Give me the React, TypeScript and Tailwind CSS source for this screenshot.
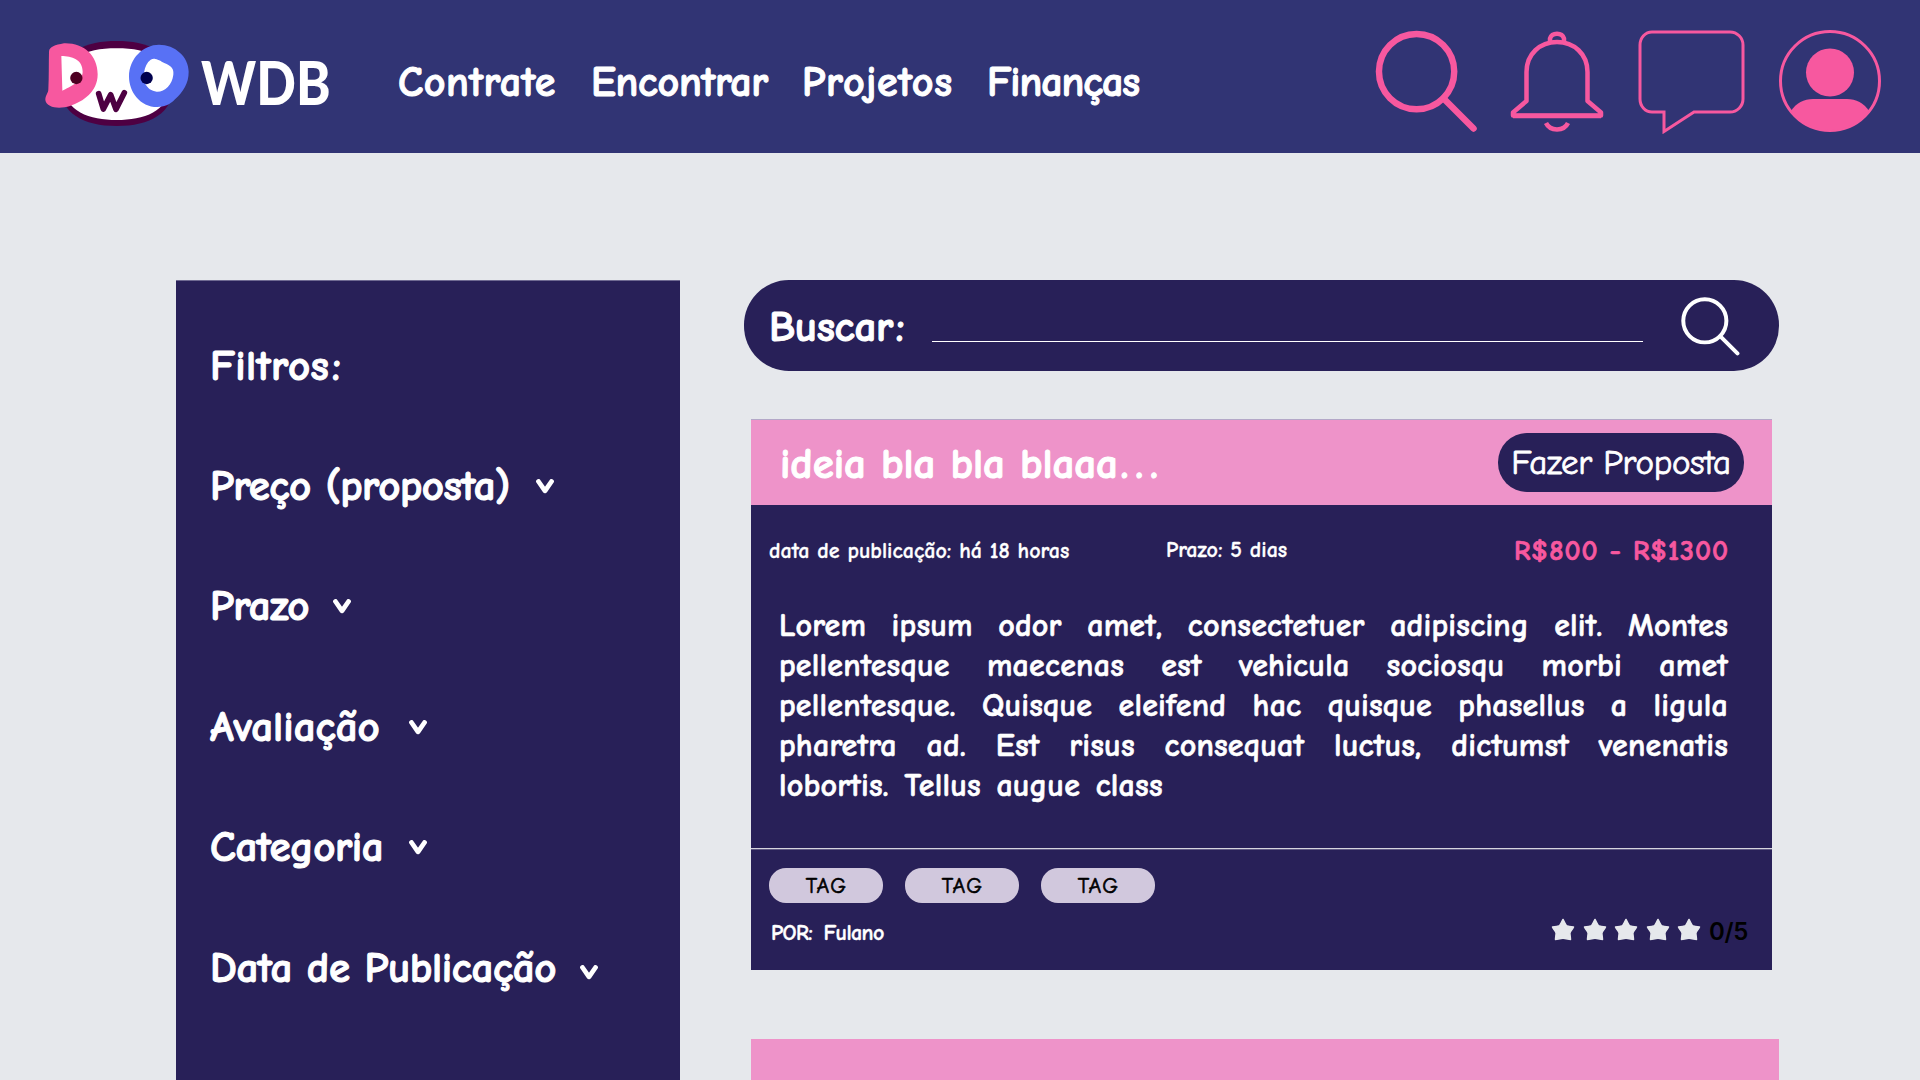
function Logo() {
  return (
    <svg className="h-[110px] w-[160px]" viewBox="0 0 480 330" fill="none">
      <path d="M60 165C60 60 140 33 230 33C320 33 400 60 400 165C400 250 330 288 230 288C130 288 60 250 60 165Z" fill="#4E0042" />
      <path d="M72 165C72 85 130 55 230 55C330 55 388 85 388 165C388 245 310 270 230 270C150 270 72 245 72 165Z" fill="#fff" />
      <path d="M27 65C28 50 45 45 72 40C130 38 173 75 173 133C173 185 130 215 90 228C60 237 20 235 16 210C16 195 25 190 25 178C27 140 26 100 27 65Z" fill="#F7589F" />
      <path d="M64 78C95 78 128 88 128 125C128 155 90 170 67 182Z" fill="#fff" />
      <path d="M357 44C405 44 446 80 446 125C446 160 430 185 405 208C390 225 370 231 352 231C300 231 267 185 267 140C267 85 310 44 357 44Z" fill="#5871F5" />
      <path d="M346 87C356 88 365 96 380 102C395 109 402 118 400 134C396 165 375 186 350 185C335 184 322 175 315 160C308 145 310 105 332 89C338 86 342 86 346 87Z" fill="#fff" />
      <circle cx="109" cy="144" r="18.500" fill="#4E0022" />
      <circle cx="320" cy="144" r="18.500" fill="#00004E" />
      <path d="M176 191L190 237L212 194L228 238L253 188" stroke="#4E0042" strokeWidth="17" strokeLinecap="round" strokeLinejoin="round" />
    </svg>
  );
}

function SearchIcon({ className, strokeWidth }: { className: string; strokeWidth: number }) {
  return (
    <svg className={className} viewBox="0 0 104 104" fill="none" stroke="currentColor" strokeWidth={strokeWidth}>
      <circle cx="42" cy="42" r="38" />
      <path d="M69 69L99.500 99.500" strokeLinecap="round" />
    </svg>
  );
}

function BellIcon() {
  return (
    <svg className="h-[102px] w-[94px]" viewBox="0 0 94 102" fill="none" stroke="currentColor" strokeWidth="4.500">
      <path d="M40 12V8.500A7.300 6.500 0 0 1 54 8.500V12" />
      <path d="M3 85.500V82.500L16.500 71V42C16.500 24 30 12 47 12S77.500 24 77.500 42V71L91 82.500V85.500Z" strokeLinejoin="round" />
      <path d="M3 86H91" />
      <path d="M36 93C40 101.500 54 101.500 58 93" />
    </svg>
  );
}

function ChatIcon() {
  return (
    <svg className="h-[104px] w-[107px]" viewBox="0 0 107 104" fill="none" stroke="currentColor" strokeWidth="3">
      <path d="M14 2H92A13 13 0 0 1 105 15V69A13 13 0 0 1 92 82H56L26 101.500V82H14A12 13 0 0 1 2 69V15A12 13 0 0 1 14 2Z" />
    </svg>
  );
}

function UserIcon() {
  return (
    <svg className="h-[104px] w-[104px]" viewBox="0 0 104 104" fill="none">
      <circle cx="52" cy="52" r="49.500" stroke="currentColor" strokeWidth="3" />
      <circle cx="52" cy="43.500" r="24" fill="currentColor" />
      <path d="M13 82C18 74 26 70 35 70H69C78 70 86 74 91 82A49.500 49.500 0 0 1 13 82Z" fill="currentColor" />
    </svg>
  );
}

function Chevron({ className }: { className: string }) {
  return (
    <svg className={'h-[15px] w-[18px] ' + className} viewBox="0 0 18 15" fill="none">
      <path d="M2.500 2.500L9 11.800L15.500 2.500" stroke="#fff" strokeWidth="4.800" strokeLinecap="round" strokeLinejoin="round" />
    </svg>
  );
}

function Star() {
  return (
    <svg className="h-[23px] w-[24px]" viewBox="0 0 24 23">
      <path d="M12 1.500C13.500 4 14.500 6.500 15.500 7.800C17.500 8.500 20.500 8.800 22.500 9C21.500 11.500 19.500 13 18.900 15C18.900 17 19.500 19.500 19.500 21.500C17 21.200 14.500 20.300 12 20.300C9.500 20.300 7 21.200 4.500 21.500C4.500 19.500 5.100 17 5.100 15C4.500 13 2.500 11.500 1.500 9C3.500 8.800 6.500 8.500 8.500 7.800C9.500 6.500 10.500 4 12 1.500Z" fill="#E6E8EC" stroke="#E6E8EC" strokeWidth="1.500" strokeLinejoin="round" />
    </svg>
  );
}

const filters = [
  { label: 'Preço (proposta)', text: 'w-[298px] tracking-[-0.55px]', chevron: 'ml-[28px]' },
  { label: 'Prazo', text: 'w-[98px] tracking-[-0.5px]', chevron: 'ml-[25px]' },
  { label: 'Avaliação', text: 'w-[168px] tracking-[0px]', chevron: 'ml-[31px]' },
  { label: 'Categoria', text: 'w-[172px] tracking-[-0.45px]', chevron: 'ml-[27px]' },
  { label: 'Data de Publicação', text: 'w-[346px] tracking-[-0.4px]', chevron: 'ml-[24px] mt-[9px]' },
];

const description = [
  'Lorem ipsum odor amet, consectetuer adipiscing elit. Montes',
  'pellentesque maecenas est vehicula sociosqu morbi amet',
  'pellentesque. Quisque eleifend hac quisque phasellus a ligula',
  'pharetra ad. Est risus consequat luctus, dictumst venenatis',
];

export default function App() {
  return (
    <div className="flex h-[1080px] w-[1920px] flex-col overflow-hidden whitespace-nowrap bg-[#E6E8EC] font-['Comic_Neue','Comic_Sans_MS',cursive] font-bold text-white">
      <header className="flex h-[153px] shrink-0 bg-[#313474]">
        <div className="flex w-[398px] items-start pl-[40px] pt-[30px]">
          <Logo />
          <div className="ml-px mt-[12px] origin-left scale-x-[0.87] font-['Lato'] text-[60px] font-black leading-[80px]">WDB</div>
        </div>
        <nav className="flex items-center gap-[35px] pt-[12px] text-[42px] [-webkit-text-stroke:1px_white]">
          <a className="w-[158px] tracking-[0.5px]">Contrate</a>
          <a className="w-[176px] tracking-[-0.3px]">Encontrar</a>
          <a className="w-[150px] tracking-[0.7px]">Projetos</a>
          <a className="w-[152px] tracking-[-1.06px]">Finanças</a>
        </nav>
        <div className="ml-auto flex items-start pr-[38px] pt-[29px] text-[#F7589F]">
          <SearchIcon className="mt-px h-[103px] w-[103px]" strokeWidth={6.5} />
          <div className="ml-[32px] mt-px"><BellIcon /></div>
          <div className="ml-[34px] mt-px"><ChatIcon /></div>
          <div className="ml-[33px]"><UserIcon /></div>
        </div>
      </header>

      <main className="flex items-start pl-[176px] pt-[127px]">
        <aside className="h-[800px] w-[504px] border-t border-[#6F6A92] bg-[#282058] pl-[34px] pt-[25px] text-[43px] leading-none [-webkit-text-stroke:1px_white]">
          <div className="flex h-[120.400px] items-center tracking-[0.3px]">Filtros<span className="ml-[3px]">:</span></div>
          {filters.map((f) => (
            <div key={f.label} className="flex h-[120.400px] items-center">
              <span className={f.text}>{f.label}</span>
              <Chevron className={f.chevron} />
            </div>
          ))}
        </aside>

        <section className="ml-[64px] w-[1035px]">
          <div className="flex h-[91px] items-center rounded-[45px] bg-[#282058] pl-[25px]">
            <div className="mt-[3px] w-[132px] text-[43px] leading-none tracking-[-0.4px] [-webkit-text-stroke:1px_white]">Buscar<span className="ml-[3px]">:</span></div>
            <div className="ml-[31px] mt-[32px] h-px w-[711px] bg-white" />
            <SearchIcon className="ml-[38px] mt-px h-[59px] w-[59px] text-white" strokeWidth={7} />
          </div>

          <article className="ml-[7px] mt-[48px] h-[551px] w-[1021px] bg-[#282058]">
            <div className="flex h-[86px] items-center justify-between border-t border-[#B4A8C8] bg-[#EE93C9] pl-[29px] pr-[28px]">
              <div className="mt-[4px] text-[43px] leading-none tracking-[-0.1px] [-webkit-text-stroke:1px_white]">
                ideia bla bla blaaa<span className="ml-[3px] tracking-[7px]">...</span>
              </div>
              <button className="flex h-[59px] w-[246px] items-center justify-center rounded-[29px] bg-[#282058] text-[35px] font-normal leading-none tracking-[-0.3px] [-webkit-text-stroke:0.8px_white]">Fazer Proposta</button>
            </div>
            <div className="flex h-[88px] items-center pl-[18px] leading-none">
              <div className="mt-[4px] w-[397px] text-[22px] [-webkit-text-stroke:0.3px_white]">data de publicação: há 18 horas</div>
              <div className="mt-[2px] w-[348px] text-[22px] [-webkit-text-stroke:0.3px_white]">Prazo: 5 dias</div>
              <div className="mt-[4px] text-[28px] tracking-[1px] text-[#F7589F] [-webkit-text-stroke:0.7px_#F7589F]">R$800 - R$1300</div>
            </div>
            <div className="ml-[28px] mt-[13px] w-[949px] text-[32px] leading-[40px] tracking-[0.2px] [-webkit-text-stroke:0.6px_white]">
              {description.map((line) => (
                <div key={line} className="[text-align-last:justify] whitespace-normal">{line}</div>
              ))}
              <div className="[word-spacing:4px]">lobortis. Tellus augue class</div>
            </div>
            <div className="mt-[42px] h-[2px] border-t border-[#D6D4DE] bg-[#5F5983]" />
            <div className="mt-[18px] flex gap-[22px] pl-[18px]">
              {[0, 1, 2].map((i) => (
                <div key={i} className="flex h-[35px] w-[114px] items-center justify-center rounded-[17px] bg-[#D1C8DD] pl-px text-[22px] font-normal leading-none tracking-[1.2px] text-black [-webkit-text-stroke:0.6px_black]">TAG</div>
              ))}
            </div>
            <div className="mt-[12px] flex items-center justify-between pl-[20px] pr-[21px]">
              <div className="mt-[7px] text-[22px] leading-none tracking-[-0.6px] [-webkit-text-stroke:0.4px_white] [word-spacing:4px]">POR: Fulano</div>
              <div className="flex items-center gap-[7.600px]">
                {[0, 1, 2, 3, 4].map((i) => <Star key={i} />)}
                <div className="mt-[5px] w-[42px] font-['Inter'] text-[24px] font-semibold leading-none tracking-[-0.3px] text-black">0/5</div>
              </div>
            </div>
          </article>

          <article className="ml-[7px] mt-[69px] h-[41px] w-[1028px] bg-[#EE93C9]" />
        </section>
      </main>
    </div>
  );
}
